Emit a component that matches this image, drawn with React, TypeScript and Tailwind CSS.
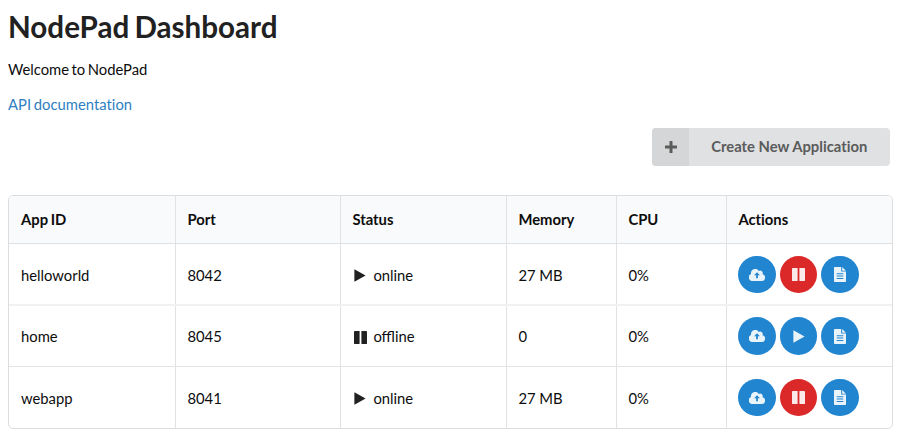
import type { ReactNode } from "react";

type App = { id: string; port: number; online: boolean; memory: string; cpu: string };

const apps: App[] = [
  { id: "helloworld", port: 8042, online: true, memory: "27 MB", cpu: "0%" },
  { id: "home", port: 8045, online: false, memory: "0", cpu: "0%" },
  { id: "webapp", port: 8041, online: true, memory: "27 MB", cpu: "0%" },
];

const headings = ["App ID", "Port", "Status", "Memory", "CPU", "Actions"];
const columns = "grid grid-cols-[166px_165px_166px_110px_110px_166px]";
const rowStyles = [
  "h-[62px] border-b-2 border-[#f1f1f2]",
  "h-[61px] border-b border-[#e3e4e5]",
  "h-[61px]",
];

function PlusIcon() {
  return (
    <svg viewBox="0 0 12 12" className="size-[12px]" fill="currentColor">
      <path d="M4.5 .5Q4.5 0 5 0H7Q7.5 0 7.5 .5V4.5H11.5Q12 4.5 12 5V7Q12 7.5 11.5 7.5H7.5V11.5Q7.5 12 7 12H5Q4.5 12 4.5 11.5V7.5H.5Q0 7.5 0 7V5Q0 4.5 .5 4.5H4.5Z" />
    </svg>
  );
}

function PlayIcon({ className }: { className: string }) {
  return (
    <svg viewBox="0 0 12 13" className={className} fill="currentColor">
      <path d="M.4.3v12.4L11.6 6.5z" />
    </svg>
  );
}

function PauseIcon({ className }: { className: string }) {
  return (
    <svg viewBox="0 0 13 13" className={className} fill="currentColor">
      <rect x="0" y="0" width="5.6" height="13" rx=".4" />
      <rect x="7.4" y="0" width="5.6" height="13" rx=".4" />
    </svg>
  );
}

function CloudIcon() {
  return (
    <svg viewBox="0 0 16 12" className="h-[12px] w-[16px]" fill="currentColor">
      <path
        fillRule="evenodd"
        d="M3.8 12A3.6 3.6 0 0 1 2 5.1V4.6A4.2 4.2 0 0 1 9.8 2A2.6 2.6 0 0 1 13.5 5.3A3.4 3.4 0 0 1 12.7 12ZM8 3.3L5.1 6.3H7.1V9.3H8.9V6.3H10.9Z"
      />
    </svg>
  );
}

function FileIcon() {
  return (
    <svg viewBox="0 0 12 15" className="h-[15px] w-[12px]" fill="currentColor">
      <path
        fillRule="evenodd"
        d="M.7 0H7.2V4.6H12V14.3Q12 15 11.3 15H.7Q0 15 0 14.3V.7Q0 0 .7 0ZM2.7 6.3V7.3H9.3V6.3ZM2.7 8.6V9.6H9.3V8.6ZM2.7 10.9V11.9H9.3V10.9Z"
      />
      <path d="M8.2.1L11.9 3.7H8.2z" />
    </svg>
  );
}

function Cell({ first, children }: { first?: boolean; children: ReactNode }) {
  return (
    <div className={`flex items-center ${first ? "pl-3" : "border-l border-[#e1e2e3] pl-[11.4px]"}`}>
      {children}
    </div>
  );
}

function RoundButton({ red, label, children }: { red?: boolean; label: string; children: ReactNode }) {
  return (
    <button
      aria-label={label}
      className={`flex size-[37.7px] shrink-0 items-center justify-center rounded-full text-white/90 ${red ? "bg-[#db2828]" : "bg-[#2185d0]"}`}
    >
      {children}
    </button>
  );
}

export default function App() {
  return (
    <main className="h-[438px] w-[900px] overflow-hidden bg-white pl-2 font-[Lato,sans-serif] text-[14.8px] leading-[21px] text-[#0d0d0d]">
      <h1 className="pt-[8px] text-[29.6px] leading-[38px] font-bold text-[#212121] [word-spacing:-2px]">NodePad Dashboard</h1>
      <p className="mt-[13px] [word-spacing:-1.3px]">Welcome to NodePad</p>
      <p className="mt-[14px]">
        <a href="#" className="text-[#2e7fc2] [font-variant-ligatures:none] [word-spacing:-1px]">API documentation</a>
      </p>
      <div className="mt-[13px] flex justify-end pr-[10.5px]">
        <button className="flex h-[38px] w-[237.5px] overflow-hidden rounded-[4px] bg-[#e0e1e2] font-bold text-[#5a5b5b]">
          <span className="flex h-full w-[37px] items-center justify-center bg-[#d5d6d7]">
            <PlusIcon />
          </span>
          <span className="flex h-full flex-1 items-center justify-center pb-px [font-variant-ligatures:none]">Create New Application</span>
        </button>
      </div>
      <div className="mt-[29px] w-[885px] overflow-hidden rounded-[5px] border border-[#dcddde]">
        <div className={`${columns} h-[48px] border-b border-[#dfe0e1] bg-[#f9fafb] font-bold [font-variant-ligatures:none]`}>
          {headings.map((h, i) => (
            <Cell key={h} first={i === 0}>
              <span className="[word-spacing:-1px]">{h}</span>
            </Cell>
          ))}
        </div>
        {apps.map((app, i) => (
          <div key={app.id} className={`${columns} ${rowStyles[i]}`}>
            <Cell first><span className={i === 0 ? "pt-[3px]" : "pt-px"}>{app.id}</span></Cell>
            <Cell><span className={i === 0 ? "pt-[3px]" : "pt-px"}>{app.port}</span></Cell>
            <Cell>
              <span className="mr-[5px] flex w-[16px] justify-center pt-[2px] text-[#212121]">
                {app.online ? <PlayIcon className="h-[13px] w-[12px]" /> : <PauseIcon className="h-[13px] w-[13px]" />}
              </span>
              <span className={i === 0 ? "pt-[3px]" : "pt-px"}>{app.online ? "online" : "offline"}</span>
            </Cell>
            <Cell><span className={i === 0 ? "pt-[3px]" : "pt-px"}>{app.memory}</span></Cell>
            <Cell><span className={i === 0 ? "pt-[3px]" : "pt-px"}>{app.cpu}</span></Cell>
            <Cell>
              <div className={`flex gap-[3.6px] ${i === 0 ? "pt-px" : ""}`}>
                <RoundButton label="Upload"><CloudIcon /></RoundButton>
                <RoundButton red={app.online} label={app.online ? "Pause" : "Start"}>
                  {app.online ? <PauseIcon className="h-[13px] w-[13px]" /> : <PlayIcon className="h-[13px] w-[12px]" />}
                </RoundButton>
                <RoundButton label="Logs"><FileIcon /></RoundButton>
              </div>
            </Cell>
          </div>
        ))}
      </div>
    </main>
  );
}
